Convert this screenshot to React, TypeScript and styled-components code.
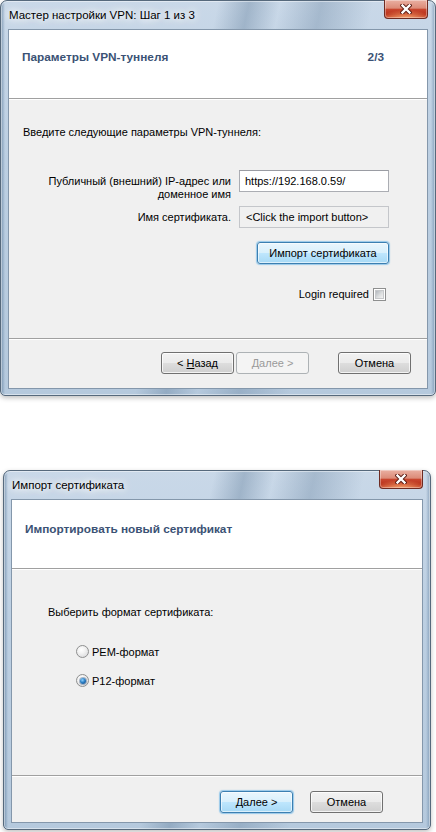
import React from "react";
import styled, { createGlobalStyle, css } from "styled-components";

const GlobalStyle = createGlobalStyle`
  html, body { margin: 0; padding: 0; background: #ffffff; }
  body {
    font-family: "Liberation Sans", Arial, sans-serif;
    font-size: 11px;
    color: #000;
  }
  #root { width: 436px; height: 832px; overflow: hidden; }
`;

const Page = styled.div`
  display: flex;
  flex-direction: column;
  align-items: flex-start;
  width: 436px;
  height: 832px;
`;

const Frame = styled.div<{ $width: number; $height: number; $top: number; $left: number }>`
  box-sizing: border-box;
  width: ${(p) => p.$width}px;
  height: ${(p) => p.$height}px;
  margin-top: ${(p) => p.$top}px;
  margin-left: ${(p) => p.$left}px;
  flex-shrink: 0;
  display: flex;
  flex-direction: column;
  padding: 0 7px 6px 7px;
  border: 1px solid #56697c;
  border-radius: 7px 7px 5px 5px;
  background:
    linear-gradient(90deg, rgba(70, 105, 140, 0.55) 0px, rgba(70, 105, 140, 0) 4px),
    linear-gradient(270deg, rgba(70, 105, 140, 0.45) 0px, rgba(70, 105, 140, 0) 4px),
    linear-gradient(102deg, rgba(255, 255, 255, 0) 42%, rgba(85, 115, 145, 0.35) 48%, rgba(255, 255, 255, 0) 54%, rgba(85, 115, 145, 0.3) 62%, rgba(255, 255, 255, 0) 72%),
    linear-gradient(to bottom, #c9d8e8 0%, #bccfe2 40%, #b5c9dd 100%);
  box-shadow: inset 0 0 0 1px rgba(255, 255, 255, 0.45), 0 2px 5px rgba(0, 0, 0, 0.25);
`;

const TitleBar = styled.div`
  display: flex;
  justify-content: space-between;
  align-items: flex-start;
  height: 28px;
  flex-shrink: 0;
`;

const TitleText = styled.div`
  padding-left: 1px;
  line-height: 28px;
  font-size: 11.5px;
  color: #000;
  text-shadow: 0 0 6px #ffffff, 0 0 10px #ffffff, 0 0 14px rgba(255, 255, 255, 0.9);
`;

const CloseButton = styled.div`
  box-sizing: border-box;
  width: 44px;
  height: 19px;
  margin-top: -1px;
  border: 1px solid #6e2b22;
  border-top: none;
  border-radius: 0 0 4px 4px;
  background:
    radial-gradient(ellipse 60% 45% at 50% 100%, rgba(255, 180, 120, 0.8), rgba(255, 180, 120, 0) 100%),
    linear-gradient(to bottom, #eab0a2 0%, #dc8b78 45%, #c8462e 52%, #b9321b 80%, #c94a2d 100%);
  box-shadow: inset 0 0 0 1px rgba(255, 255, 255, 0.35);
  display: flex;
  align-items: center;
  justify-content: center;
`;

const Client = styled.div`
  flex: 1;
  display: flex;
  flex-direction: column;
  border: 1px solid #8497ab;
  background: #f0f0f0;
  min-height: 0;
`;

const Header = styled.div<{ $padTop: number }>`
  box-sizing: border-box;
  height: 69px;
  flex-shrink: 0;
  display: flex;
  justify-content: space-between;
  align-items: flex-start;
  padding: ${(p) => p.$padTop}px 43px 0 13px;
  background: #ffffff;
  border-bottom: 1px solid #a0a0a0;
  font-weight: bold;
  font-size: 11.8px;
  line-height: 14px;
  color: #3b5275;
`;

const Body = styled.div<{ $pad: string }>`
  flex: 1;
  display: flex;
  flex-direction: column;
  padding: ${(p) => p.$pad};
  border-top: 1px solid #ffffff;
`;

const Text = styled.div`
  line-height: 14px;
  white-space: nowrap;
`;

const Form = styled.div`
  display: grid;
  grid-template-columns: auto 150px;
  column-gap: 8px;
  row-gap: 14px;
  justify-content: end;
  margin-top: 31px;
`;

const FieldLabel = styled.div`
  box-sizing: border-box;
  height: 22px;
  overflow: visible;
  text-align: right;
  line-height: 13px;
  padding-top: 5px;
  white-space: nowrap;
`;

const TextBox = styled.div<{ $readOnly?: boolean }>`
  box-sizing: border-box;
  height: 22px;
  padding: 0 5px;
  line-height: 20px;
  white-space: nowrap;
  border: 1px solid #abadb3;
  border-top-color: #9a9ca3;
  background: #ffffff;
  ${(p) =>
    p.$readOnly &&
    css`
      padding-left: 6px;
      border-color: #c4c6ca;
      background: #f0f0f0;
    `}
`;

const ButtonCell = styled.div`
  grid-column: 2;
  display: flex;
  justify-content: flex-end;
`;

const CheckRow = styled.div`
  grid-column: 1 / span 2;
  justify-self: end;
  display: flex;
  align-items: center;
  gap: 4px;
  margin-top: 9px;
  margin-right: 3px;
  line-height: 14px;
`;

const CheckBox = styled.span`
  box-sizing: border-box;
  width: 13px;
  height: 13px;
  border: 1px solid #8e8f8f;
  background: #ffffff;
  padding: 2px;
  display: flex;
  &::before {
    content: "";
    flex: 1;
    background: linear-gradient(135deg, #b2b7bd 0%, #dcdedf 55%, #f2f2f2 100%);
    border: 1px solid #c6c8ca;
    margin: -1px;
  }
`;

const Footer = styled.div<{ $padTop: number; $padRight: number; $height: number }>`
  box-sizing: border-box;
  height: ${(p) => p.$height}px;
  flex-shrink: 0;
  display: flex;
  justify-content: flex-end;
  align-items: flex-start;
  padding: ${(p) => p.$padTop}px ${(p) => p.$padRight}px 0 0;
  border-top: 1px solid #a0a0a0;
  box-shadow: inset 0 1px 0 #ffffff;
`;

const ButtonGroup = styled.div<{ $gap: number }>`
  display: flex;
  gap: ${(p) => p.$gap}px;
`;

type BtnKind = "normal" | "primary" | "disabled";

const Button = styled.button<{ $kind?: BtnKind; $w: number; $ml?: number }>`
  box-sizing: border-box;
  width: ${(p) => p.$w}px;
  height: 22px;
  margin: 0 0 0 ${(p) => p.$ml ?? 0}px;
  padding: 0;
  font-family: "Liberation Sans", Arial, sans-serif;
  font-size: 11px;
  line-height: 20px;
  color: #000;
  border: 1px solid #707070;
  border-radius: 3px;
  background: linear-gradient(to bottom, #f2f2f2 0%, #ebebeb 48%, #dddddd 52%, #cfcfcf 100%);
  box-shadow: inset 0 0 0 1px rgba(255, 255, 255, 0.75);
  ${(p) =>
    p.$kind === "primary" &&
    css`
      border-color: #3c7fb1;
      background: linear-gradient(to bottom, #eaf6fd 0%, #d9f0fc 48%, #bee6fd 52%, #a7d9f5 100%);
      box-shadow: inset 0 0 0 1px rgba(255, 255, 255, 0.6), 0 0 1px 1px rgba(80, 170, 230, 0.55);
    `}
  ${(p) =>
    p.$kind === "disabled" &&
    css`
      color: #9a9a9a;
      border-color: #adb2b5;
      background: #f4f4f4;
      box-shadow: none;
    `}
`;

const RadioGroup = styled.div`
  display: flex;
  flex-direction: column;
  gap: 16px;
  margin: 26px 0 0 28px;
`;

const RadioRow = styled.div`
  display: flex;
  align-items: center;
  gap: 3px;
  line-height: 14px;
  height: 13px;
`;

const RadioCircle = styled.span<{ $checked?: boolean }>`
  box-sizing: border-box;
  width: 13px;
  height: 13px;
  border-radius: 50%;
  border: 1px solid #8e8f8f;
  background: radial-gradient(circle at 40% 35%, #ffffff 0%, #f3f3f3 35%, #d3d4d6 100%);
  display: flex;
  align-items: center;
  justify-content: center;
  ${(p) =>
    p.$checked &&
    css`
      &::before {
        content: "";
        width: 6px;
        height: 6px;
        border-radius: 50%;
        background: radial-gradient(circle at 40% 35%, #8fd2ff 0%, #2c7fc4 45%, #0b3f80 100%);
        box-shadow: 0 0 0 1px rgba(20, 60, 110, 0.35);
      }
    `}
`;

const CloseIcon = () => (
  <svg width="12" height="10" viewBox="0 0 12 10">
    <path d="M2.5 1.5 L9.5 8.5 M9.5 1.5 L2.5 8.5" stroke="#5a1a12" strokeWidth="4.2" strokeLinecap="square" />
    <path d="M2.5 1.5 L9.5 8.5 M9.5 1.5 L2.5 8.5" stroke="#ffffff" strokeWidth="2.4" strokeLinecap="square" />
  </svg>
);

const Window: React.FC<{
  title: string;
  width: number;
  height: number;
  top: number;
  left: number;
  children: React.ReactNode;
}> = ({ title, width, height, top, left, children }) => (
  <Frame $width={width} $height={height} $top={top} $left={left}>
    <TitleBar>
      <TitleText>{title}</TitleText>
      <CloseButton>
        <CloseIcon />
      </CloseButton>
    </TitleBar>
    <Client>{children}</Client>
  </Frame>
);

export default function App() {
  return (
    <>
      <GlobalStyle />
      <Page>
        <Window title="Мастер настройки VPN: Шаг 1 из 3" width={436} height={396} top={0} left={0}>
          <Header $padTop={20}>
            <span>Параметры VPN-туннеля</span>
            <span>2/3</span>
          </Header>
          <Body $pad="25px 38px 0 14px">
            <Text>Введите следующие параметры VPN-туннеля:</Text>
            <Form>
              <FieldLabel>
                Публичный (внешний) IP-адрес или
                <br />
                доменное имя
              </FieldLabel>
              <TextBox>https://192.168.0.59/</TextBox>
              <FieldLabel>Имя сертификата.</FieldLabel>
              <TextBox $readOnly>&lt;Click the import button&gt;</TextBox>
              <ButtonCell>
                <Button $kind="primary" $w={132}>
                  Импорт сертификата
                </Button>
              </ButtonCell>
              <CheckRow>
                <span>Login required</span>
                <CheckBox />
              </CheckRow>
            </Form>
          </Body>
          <Footer $padTop={13} $padRight={16} $height={50}>
            <ButtonGroup $gap={2}>
              <Button $w={73}>
                &lt; <u>Н</u>азад
              </Button>
              <Button $kind="disabled" $w={73}>
                <u>Д</u>алее &gt;
              </Button>
            </ButtonGroup>
            <Button $w={73} $ml={29}>
              Отмена
            </Button>
          </Footer>
        </Window>

        <Window title="Импорт сертификата" width={428} height={360} top={74} left={3}>
          <Header $padTop={22}>
            <span>Импортировать новый сертификат</span>
          </Header>
          <Body $pad="35px 0 0 36px">
            <Text>Выберить формат сертификата:</Text>
            <RadioGroup>
              <RadioRow>
                <RadioCircle />
                <span>PEM-формат</span>
              </RadioRow>
              <RadioRow>
                <RadioCircle $checked />
                <span>P12-формат</span>
              </RadioRow>
            </RadioGroup>
          </Body>
          <Footer $padTop={15} $padRight={39} $height={47}>
            <Button $kind="primary" $w={73}>
              Далее &gt;
            </Button>
            <Button $w={73} $ml={17}>
              Отмена
            </Button>
          </Footer>
        </Window>
      </Page>
    </>
  );
}
